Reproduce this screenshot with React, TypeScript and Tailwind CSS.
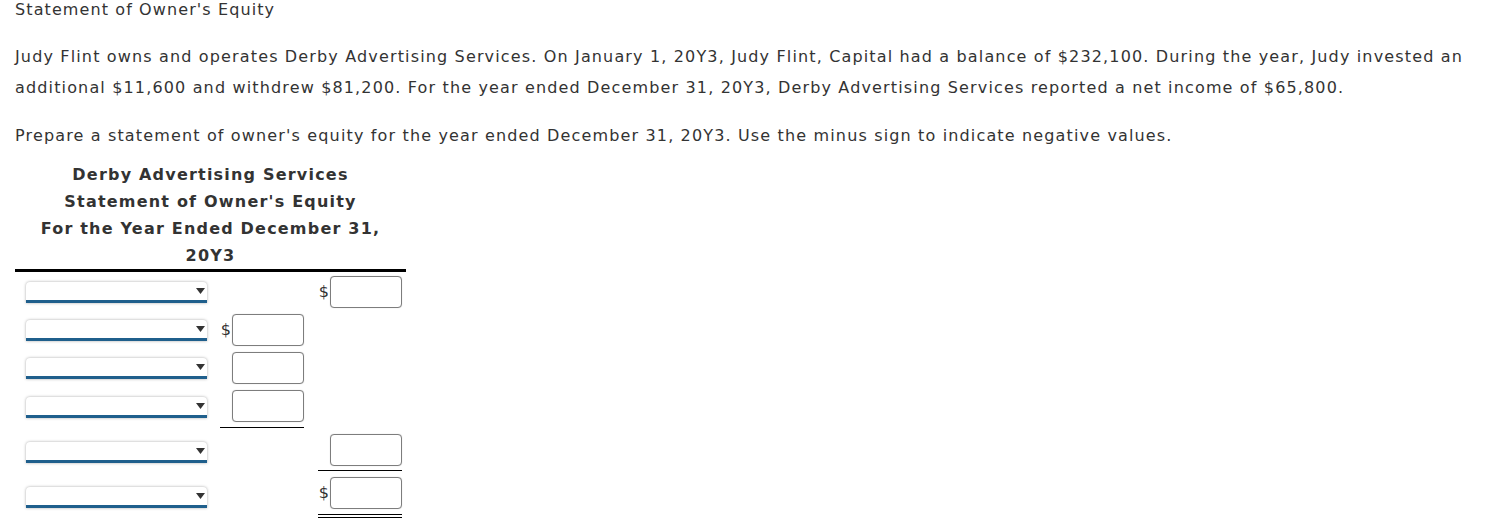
import { useState } from "react";

type Row = {
  pad: string;
  selTop: string;
  c2?: { dollar?: boolean; line?: string };
  c3?: { dollar?: boolean; line?: string };
};

// rows of the statement, paddings tuned per row (underlines make some taller)
const rows: Row[] = [
  { pad: "pt-[4px] pb-[2px]", selTop: "mt-[10px]", c3: { dollar: true } },
  { pad: "pt-[4px] pb-[2px]", selTop: "mt-[10px]", c2: { dollar: true } },
  { pad: "pt-[4px] pb-[2px]", selTop: "mt-[10px]", c2: {} },
  {
    pad: "pt-[4px] pb-[5px]",
    selTop: "mt-[11px]",
    c2: { line: "border-b border-black" },
  },
  {
    pad: "pt-[6px] pb-[4px]",
    selTop: "mt-[14px]",
    c3: { line: "border-b border-black" },
  },
  {
    pad: "pt-[6px] pb-[5px]",
    selTop: "mt-[16px]",
    c3: { dollar: true, line: "border-b-4 border-double border-black" },
  },
];

function Dropdown({ top }: { top: string }) {
  const [val, setVal] = useState("");
  return (
    <div className={`relative w-[181px] ${top}`}>
      <select
        value={val}
        onChange={(e) => setVal(e.target.value)}
        className="block h-[21px] w-[181px] appearance-none rounded-t-[4px] border-b-[3px] border-[#1f5f8c] bg-white shadow-[0_0_3px_rgba(0,0,0,0.35)] outline-none"
      >
        <option value=""></option>
        <option value="capital">Judy Flint, Capital, January 1, 20Y3</option>
        <option value="invest">Investment during the year</option>
        <option value="income">Net income</option>
        <option value="withdraw">Withdrawals</option>
      </select>
      <svg
        className="pointer-events-none absolute right-[2px] top-[6px]"
        width="9"
        height="6"
        viewBox="0 0 9 6"
      >
        <path d="M0 0 H9 L4.5 6 Z" fill="#333" />
      </svg>
    </div>
  );
}

function AmountCell({
  cell,
  pad,
}: {
  cell?: { dollar?: boolean; line?: string };
  pad: string;
}) {
  if (!cell) return <div className="w-[84px]" />;
  return (
    <div className={`flex w-[84px] items-center justify-end ${pad} ${cell.line ?? ""}`}>
      {cell.dollar && <span className="mr-[1px] text-[16px] leading-none">$</span>}
      <input
        type="text"
        className="h-[32px] w-[72px] rounded-[4px] border border-[#7d7d7d] bg-white shadow-[0_0_1px_rgba(0,0,0,0.25)] outline-none"
      />
    </div>
  );
}

export default function App() {
  return (
    <div className="bg-white px-[15px] font-['DejaVu_Sans',Verdana,sans-serif] text-[16px] text-[#333]">
      <p className="leading-[19px] tracking-[1.1px]">Statement of Owner's Equity</p>

      <p className="mt-[22px] whitespace-nowrap leading-[31px] tracking-[1.15px]">
        Judy Flint owns and operates Derby Advertising Services. On January 1, 20Y3, Judy Flint,
        Capital had a balance of $232,100. During the year, Judy invested an
        <br />
        additional $11,600 and withdrew $81,200. For the year ended December 31, 20Y3, Derby
        Advertising Services reported a net income of $65,800.
      </p>

      <p className="mt-[17px] whitespace-nowrap leading-[31px] tracking-[1.15px]">
        Prepare a statement of owner's equity for the year ended December 31, 20Y3. Use the minus
        sign to indicate negative values.
      </p>

      <div className="mt-[10px] w-[391px]">
        {/* heading */}
        <div className="border-b-[3px] border-black text-center font-bold leading-[27px] tracking-[1.2px]">
          <div>Derby Advertising Services</div>
          <div>Statement of Owner's Equity</div>
          <div>For the Year Ended December 31,</div>
          <div>20Y3</div>
        </div>

        {/* rows */}
        {rows.map((r, i) => (
          <div key={i} className="flex items-start">
            <div className="w-[205px] pl-[11px]">
              <Dropdown top={r.selTop} />
            </div>
            <AmountCell cell={r.c2} pad={r.pad} />
            <div className="w-[14px]" />
            <AmountCell cell={r.c3} pad={r.pad} />
          </div>
        ))}
      </div>
    </div>
  );
}
